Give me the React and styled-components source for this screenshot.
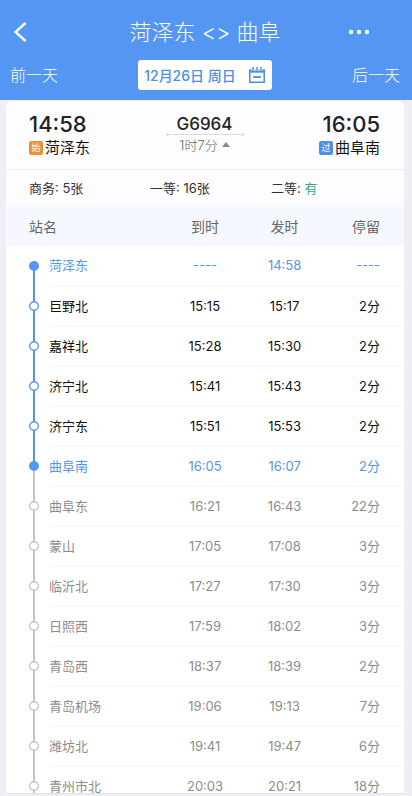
import React from "react";
import styled, { createGlobalStyle } from "styled-components";

const stops = [
  { name: "菏泽东", arrive: "----", depart: "14:58", stay: "----", state: "end" },
  { name: "巨野北", arrive: "15:15", depart: "15:17", stay: "2分", state: "mid" },
  { name: "嘉祥北", arrive: "15:28", depart: "15:30", stay: "2分", state: "mid" },
  { name: "济宁北", arrive: "15:41", depart: "15:43", stay: "2分", state: "mid" },
  { name: "济宁东", arrive: "15:51", depart: "15:53", stay: "2分", state: "mid" },
  { name: "曲阜南", arrive: "16:05", depart: "16:07", stay: "2分", state: "end" },
  { name: "曲阜东", arrive: "16:21", depart: "16:43", stay: "22分", state: "off" },
  { name: "蒙山", arrive: "17:05", depart: "17:08", stay: "3分", state: "off" },
  { name: "临沂北", arrive: "17:27", depart: "17:30", stay: "3分", state: "off" },
  { name: "日照西", arrive: "17:59", depart: "18:02", stay: "3分", state: "off" },
  { name: "青岛西", arrive: "18:37", depart: "18:39", stay: "2分", state: "off" },
  { name: "青岛机场", arrive: "19:06", depart: "19:13", stay: "7分", state: "off" },
  { name: "潍坊北", arrive: "19:41", depart: "19:47", stay: "6分", state: "off" },
  { name: "青州市北", arrive: "20:03", depart: "20:21", stay: "18分", state: "off" },
];

const textColors = { end: "#5596e6", mid: "#111", off: "#8c8c8c" };
const BLUE = "#5596f2";
const GREY = "#c4c4c4";

const railColor = (index) => {
  if (index >= stops.length) return GREY;
  return stops[index].state === "off" ? GREY : BLUE;
};

const App = () => {
  return (
    <Page>
      <GlobalStyle />
      <Header>
        <TitleBar>
          <IconButton aria-label="返回">
            <svg width="14" height="20" viewBox="0 0 14 20" fill="none">
              <path d="M12.5 1 L2.5 10 L12.5 19" stroke="#fff" strokeWidth="2.4" />
            </svg>
          </IconButton>
          <Title>菏泽东 &lt;&gt; 曲阜</Title>
          <IconButton aria-label="更多" $end>
            <svg width="22" height="6" viewBox="0 0 22 6" fill="#fff">
              <circle cx="3" cy="3" r="2.2" />
              <circle cx="11" cy="3" r="2.2" />
              <circle cx="19" cy="3" r="2.2" />
            </svg>
          </IconButton>
        </TitleBar>
        <DateBar>
          <DayButton>前一天</DayButton>
          <DateButton>
            12月26日 周日
            <svg width="18" height="18" viewBox="0 0 18 18" fill="none" stroke="#4a8ee6">
              <path d="M1.8 4 V16.2 H16.2 V4" strokeWidth="1.5" />
              <path d="M1 4.7 H17" strokeWidth="3" />
              <path d="M5 0 V5 M9 0 V5 M13 0 V5" stroke="#fff" strokeWidth="3.2" />
              <path d="M5 1 V5 M9 1 V5 M13 1 V5" strokeWidth="1.4" />
              <path d="M2 6 H16" strokeWidth="1.2" />
              <path d="M5 11 H13" strokeWidth="1.8" />
            </svg>
          </DateButton>
          <DayButton $end>后一天</DayButton>
        </DateBar>
      </Header>

      <Card>
        <Summary>
          <Terminal>
            <Clock>14:58</Clock>
            <Station>
              <Badge $color="#e9913a">始</Badge>
              菏泽东
            </Station>
          </Terminal>
          <Train>
            <TrainCode>G6964</TrainCode>
            <Duration>
              1时7分
              <svg width="8" height="6" viewBox="0 0 8 6" fill="#8a8a8a">
                <path d="M4 0 L8 5 H0 Z" />
              </svg>
            </Duration>
          </Train>
          <Terminal $end>
            <Clock>16:05</Clock>
            <Station>
              <Badge $color="#4f8fe9">过</Badge>
              曲阜南
            </Station>
          </Terminal>
        </Summary>

        <Seats>
          <Seat>商务: 5张</Seat>
          <Seat>一等: 16张</Seat>
          <Seat>
            二等: <Available>有</Available>
          </Seat>
        </Seats>

        <StopTable>
          <colgroup>
            <RailCol />
            <col />
            <TimeCol />
            <TimeCol />
            <TimeCol />
          </colgroup>
          <thead>
            <tr>
              <HeadCell colSpan={2} $align="left">
                站名
              </HeadCell>
              <HeadCell>到时</HeadCell>
              <HeadCell>发时</HeadCell>
              <HeadCell $align="right">停留</HeadCell>
            </tr>
          </thead>
          <tbody>
            {stops.map((stop, i) => (
              <StopRow key={stop.name} $color={textColors[stop.state]}>
                <RailCell
                  $above={i === 0 ? "transparent" : railColor(i)}
                  $below={railColor(i + 1)}
                >
                  <Marker state={stop.state} />
                </RailCell>
                <Cell $align="left">{stop.name}</Cell>
                <Cell>{stop.arrive}</Cell>
                <Cell>{stop.depart}</Cell>
                <Cell $align="right">{stop.stay}</Cell>
              </StopRow>
            ))}
          </tbody>
        </StopTable>
      </Card>
    </Page>
  );
};

const Marker = ({ state }) => {
  const color = state === "off" ? GREY : BLUE;
  return (
    <MarkerIcon width="10" height="10" viewBox="0 0 10 10">
      <circle
        cx="5"
        cy="5"
        r="4.3"
        fill={state === "end" ? color : "#fff"}
        stroke={color}
        strokeWidth="1.4"
      />
    </MarkerIcon>
  );
};

export default App;

const GlobalStyle = createGlobalStyle`
  * {
    box-sizing: border-box;
  }
  body {
    margin: 0;
    background: #efeef4;
    font-family: Inter, "Noto Sans CJK SC", sans-serif;
  }
  button {
    padding: 0;
    border: 0;
    background: none;
    font: inherit;
    color: inherit;
    cursor: pointer;
  }
`;

const Page = styled.div`
  display: flex;
  flex-direction: column;
  height: 100vh;
  padding-bottom: 2px;
`;

const Header = styled.header`
  flex: none;
  padding: 12px 12px 10px 10px;
  background: ${BLUE};
  color: #fff;
`;

const TitleBar = styled.div`
  display: grid;
  grid-template-columns: 1fr auto 1fr;
  align-items: center;
  height: 40px;
`;

const Title = styled.h1`
  margin: 0;
  font-size: 22px;
  font-weight: 300;
  line-height: 40px;
`;

const IconButton = styled.button`
  display: flex;
  justify-content: ${(props) => (props.$end ? "flex-end" : "flex-start")};
  align-items: center;
  height: 40px;
  padding: ${(props) => (props.$end ? "0 30px 0 0" : "0 0 0 3px")};
`;

const DateBar = styled.div`
  display: grid;
  grid-template-columns: 1fr auto 1fr;
  align-items: center;
  margin-top: 8px;
`;

const DayButton = styled.button`
  justify-self: ${(props) => (props.$end ? "end" : "start")};
  font-size: 16px;
  font-weight: 300;
  line-height: 30px;
`;

const DateButton = styled.button`
  && {
    display: flex;
    align-items: center;
    gap: 12px;
    height: 30px;
    padding: 0 6px;
    border-radius: 3px;
    background: #fff;
    color: #4a8ee6;
    font-size: 14px;
    font-weight: 500;
  }
`;

const Card = styled.main`
  flex: 1;
  min-height: 0;
  margin: 1px 8px 0 6px;
  overflow: hidden;
  border-bottom: 1px solid #e2e2e6;
  border-radius: 6px 6px 0 0;
  background: #fff;
`;

const Summary = styled.section`
  display: grid;
  grid-template-columns: 1fr 78px 1fr;
  padding: 10px 24px 10px 23px;
  border-bottom: 1px solid #eeeef0;
  background: #fdfdff;
`;

const Terminal = styled.div`
  display: flex;
  flex-direction: column;
  align-items: ${(props) => (props.$end ? "flex-end" : "flex-start")};
`;

const Clock = styled.div`
  color: #222;
  font-size: 22px;
  font-weight: 500;
  line-height: 26px;
`;

const Station = styled.div`
  display: flex;
  align-items: center;
  gap: 2px;
  color: #111;
  font-size: 15px;
  line-height: 22px;
`;

const Badge = styled.span`
  width: 14px;
  height: 14px;
  border-radius: 2px;
  background: ${(props) => props.$color};
  color: #fff;
  font-size: 9px;
  line-height: 14px;
  text-align: center;
`;

const Train = styled.div`
  text-align: center;
`;

const TrainCode = styled.div`
  position: relative;
  padding-top: 3px;
  border-bottom: 1px solid #dcdce0;
  color: #222;
  font-size: 17px;
  font-weight: 500;
  line-height: 20px;

  &:before,
  &:after {
    content: "";
    position: absolute;
    bottom: -2px;
    width: 3px;
    height: 3px;
    border-radius: 50%;
    background: #dcdce0;
  }
  &:before {
    left: 0;
  }
  &:after {
    right: 0;
  }
`;

const Duration = styled.div`
  display: flex;
  justify-content: center;
  align-items: center;
  gap: 4px;
  color: #666;
  font-size: 13px;
  font-weight: 300;
  line-height: 20px;
`;

const Seats = styled.section`
  display: grid;
  grid-template-columns: repeat(3, 1fr);
  padding: 8px 12px 8px 23px;
  background: #fdfdff;
`;

const Seat = styled.div`
  color: #333;
  font-size: 13px;
  line-height: 20px;
`;

const Available = styled.span`
  color: #3fa57a;
`;

const StopTable = styled.table`
  width: 100%;
  table-layout: fixed;
  border-collapse: collapse;
`;

const RailCol = styled.col`
  width: 43px;
`;

const TimeCol = styled.col`
  width: 20%;
`;

const HeadCell = styled.th`
  height: 40px;
  padding: 0;
  padding-inline: ${(props) => (props.$align ? "23px 24px" : "0")};
  background: #f5f8fe;
  color: #666;
  font-size: 14px;
  font-weight: 400;
  text-align: ${(props) => props.$align || "center"};
`;

const StopRow = styled.tr`
  color: ${(props) => props.$color};
`;

const Cell = styled.td`
  height: 40px;
  padding: 0 ${(props) => (props.$align === "right" ? "24px" : "0")} 0 0;
  border-bottom: 1px solid #f4f4f5;
  font-size: 13px;
  line-height: 39px;
  text-align: ${(props) => props.$align || "center"};
  vertical-align: baseline;
`;

const RailCell = styled.td`
  height: 40px;
  padding: 0 0 0 23px;
  background: linear-gradient(
      ${(props) => props.$above} 50%,
      ${(props) => props.$below} 50%
    )
    27px 0 / 2px 100% no-repeat;
`;

const MarkerIcon = styled.svg`
  display: block;
`;
